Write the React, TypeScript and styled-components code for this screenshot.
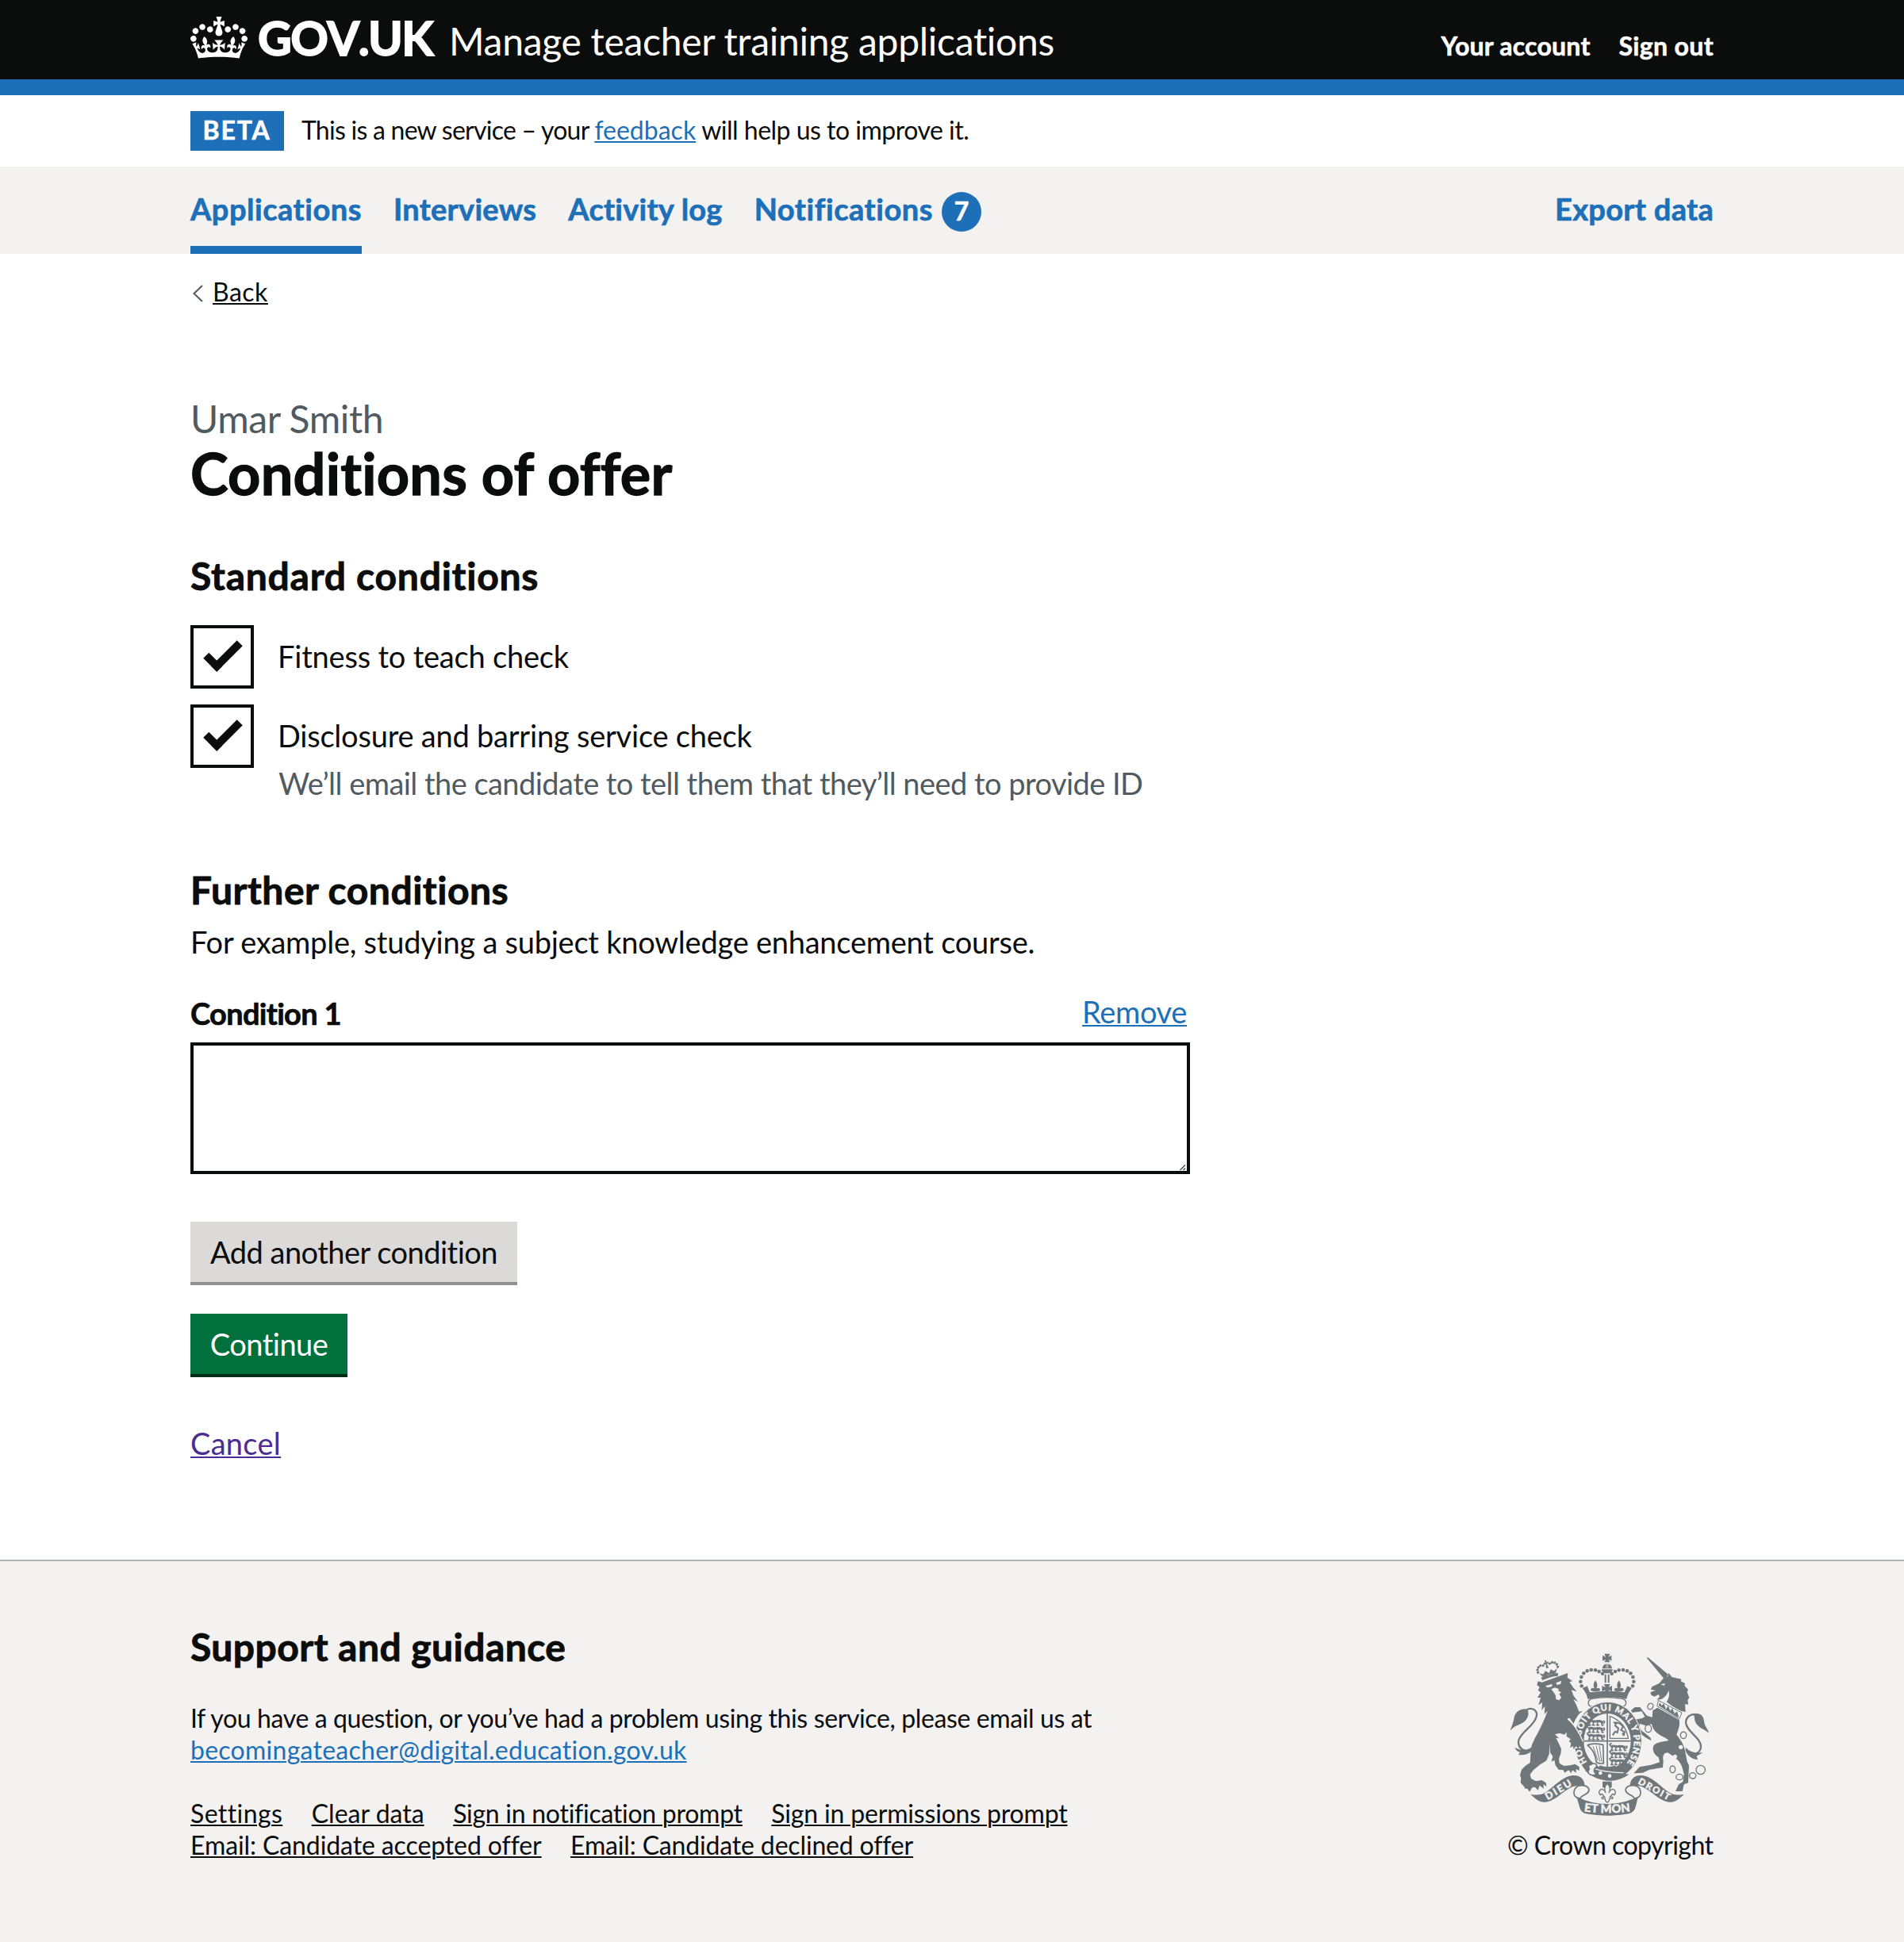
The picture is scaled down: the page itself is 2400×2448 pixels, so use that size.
import React from 'react';
import styled, { createGlobalStyle, css } from 'styled-components';

const ink = '#0b0c0c';
const blue = '#1d70b8';
const grey = '#505a5f';
const paper = '#f3f2f1';
const crest = '#6f777b';

const Global = createGlobalStyle`
  *, *::before, *::after { box-sizing: border-box; }
  body {
    margin: 0;
    background: #fff;
    color: ${ink};
    font-family: Lato, "Liberation Sans", sans-serif;
    font-variant-ligatures: none;
    -webkit-font-smoothing: antialiased;
  }
`;

const strong = css`
  font-weight: 700;
  -webkit-text-stroke: 0.018em currentColor;
`;

/* Tracked text: $t is the letter spacing in pixels */
const T = styled.span<{ $t?: number }>`
  letter-spacing: ${p => p.$t ?? 0}px;
  white-space: nowrap;
`;

const Container = styled.div`
  width: 1920px;
  margin: 0 auto;
`;

const Link = styled.a<{ $c?: string; $t?: number }>`
  color: ${p => p.$c ?? blue};
  letter-spacing: ${p => p.$t ?? 0}px;
  white-space: nowrap;
  text-decoration: underline;
  text-decoration-thickness: 2px;
  text-underline-offset: 2px;
`;

/* Header */
const Header = styled.header`
  height: 120px;
  background: ${ink};
  border-bottom: 20px solid ${blue};
  color: #fff;
`;
const HeaderRow = styled(Container)`
  display: flex;
  align-items: baseline;
  padding-top: 18px;
`;
const CrownIcon = styled.svg`
  align-self: flex-start;
  width: 72px;
  height: 53px;
  margin-top: 3px;
  flex: none;
`;
const LogoText = styled.span`
  ${strong}
  -webkit-text-stroke: 0.03em currentColor;
  flex: none;
  width: 219px;
  font-size: 59px;
  line-height: 60px;
  font-kerning: none;
  letter-spacing: -1.6px;
  margin-left: 13px;
`;
const ServiceName = styled.span`
  font-size: 48px;
  line-height: 60px;
  letter-spacing: -0.28px;
  margin-left: 22px;
  white-space: nowrap;
`;
const AccountNav = styled.nav`
  display: flex;
  gap: 36px;
  margin-left: auto;
  font-size: 32px;
  ${strong}
`;

/* Phase banner */
const Phase = styled(Container)`
  display: flex;
  align-items: center;
  height: 90px;
  font-size: 32px;
`;
const Tag = styled.strong`
  ${strong}
  width: 118px;
  height: 50px;
  line-height: 47px;
  padding-left: 15.5px;
  background: ${blue};
  color: #fff;
  letter-spacing: 1.9px;
`;
const PhaseText = styled.p`
  margin: 0 0 0 22px;
  line-height: 40px;
  padding-bottom: 3px;
  display: flex;
`;

/* Primary navigation */
const NavBar = styled.nav`
  background: ${paper};
`;
const NavRow = styled(Container)`
  display: flex;
  gap: 40px;
`;
const NavItem = styled.a<{ $current?: boolean; $end?: boolean; $t: number }>`
  display: flex;
  height: 110px;
  padding: 28px 0 22px;
  border-bottom: 10px solid ${p => (p.$current ? blue : 'transparent')};
  margin-left: ${p => (p.$end ? 'auto' : '0')};
  color: ${blue};
  font-size: 38px;
  line-height: 50px;
  letter-spacing: ${p => p.$t}px;
  white-space: nowrap;
  ${strong}
`;
const Badge = styled.span`
  width: 50px;
  height: 50px;
  margin: 4px 0 0 11px;
  border-radius: 50%;
  background: ${blue};
  color: #fff;
  font-size: 32px;
  line-height: 47px;
  letter-spacing: 0;
  text-align: center;
`;

/* Page body */
const Back = styled.div`
  display: flex;
  padding: 28px 0 0 2px;
  font-size: 32px;
  line-height: 40px;
`;
const Chevron = styled.svg`
  width: 14px;
  height: 24px;
  margin: 10px 12px 0 0;
`;
const Main = styled.main`
  padding-top: 110px;
  padding-bottom: 122px;
`;
const Caption = styled.span`
  display: block;
  color: ${grey};
  font-size: 48px;
  line-height: 60px;
  letter-spacing: -0.41px;
`;
const H1 = styled.h1`
  ${strong}
  margin: 0;
  font-size: 72px;
  line-height: 76px;
  letter-spacing: 0.24px;
`;
const H2 = styled.h2<{ $top: number; $t: number }>`
  ${strong}
  margin: ${p => p.$top}px 0 0;
  font-size: 48px;
  line-height: 60px;
  letter-spacing: ${p => p.$t}px;
`;
const Checks = styled.div`
  display: flex;
  flex-direction: column;
  gap: 20px;
  margin-top: 32px;
  font-size: 38px;
`;
const CheckRow = styled.label`
  display: flex;
  gap: 30px;
`;
const Box = styled.span`
  flex: none;
  width: 80px;
  height: 80px;
  border: 4px solid ${ink};
  background: #fff;
`;
const Tick = styled.span`
  display: block;
  width: 46px;
  height: 24px;
  margin: 18px 0 0 14px;
  border: solid ${ink};
  border-width: 0 0 10px 10px;
  transform: rotate(-45deg);
`;
const CheckText = styled.span`
  display: flex;
  flex-direction: column;
  line-height: 79px;
`;
const Hint = styled.span`
  margin-top: -5px;
  margin-left: 1px;
  color: ${grey};
  line-height: 50px;
  letter-spacing: -0.54px;
`;
const Body = styled.p`
  margin: 10px 0 0;
  font-size: 38px;
  line-height: 50px;
  letter-spacing: -0.24px;
`;
const Field = styled.div`
  width: 1260px;
  margin-top: 40px;
  font-size: 38px;
  line-height: 50px;
`;
const FieldHead = styled.div`
  display: flex;
  justify-content: space-between;
  padding-right: 4px;
  height: 62px;
`;
const Label = styled.label`
  ${strong}
  letter-spacing: -0.7px;
`;
const RemoveWrap = styled.span`
  margin-top: -2px;
`;
const AreaWrap = styled.div`
  display: grid;
`;
const Area = styled.textarea`
  grid-area: 1 / 1;
  width: 100%;
  height: 166px;
  margin: 0;
  border: 4px solid ${ink};
  border-radius: 0;
  background: #fff;
  resize: none;
`;
const Grip = styled.svg`
  grid-area: 1 / 1;
  align-self: end;
  justify-self: end;
  width: 8px;
  height: 8px;
  margin: 0 5px 4px 0;
`;
const Button = styled.button<{ $bg: string; $fg: string; $shadow: string; $w: number; $top: number; $t: number }>`
  display: block;
  width: ${p => p.$w}px;
  height: 76px;
  margin: ${p => p.$top}px 0 0;
  padding: 0;
  border: 0;
  background: ${p => p.$bg};
  box-shadow: 0 4px 0 ${p => p.$shadow};
  color: ${p => p.$fg};
  font-family: inherit;
  font-size: 38px;
  line-height: 75px;
  letter-spacing: ${p => p.$t}px;
`;
const CancelRow = styled.p`
  margin: 62px 0 0;
  font-size: 38px;
  line-height: 50px;
`;

/* Footer */
const Footer = styled.footer`
  height: 482px;
  border-top: 2px solid #b1b4b6;
  background: ${paper};
  font-size: 32px;
  line-height: 40px;
`;
const FooterRow = styled(Container)`
  display: flex;
  justify-content: space-between;
  align-items: flex-end;
`;
const Para = styled.p`
  margin: 40px 0 0;
`;
const Line = styled.div`
  display: flex;
  gap: 36.5px;
`;
const Meta = styled.div`
  margin-top: 40px;
`;
const Copyright = styled.div`
  display: flex;
  flex-direction: column;
  width: 260px;
`;
const Arms = styled.svg`
  width: 260px;
  height: 206.67px;
  margin-bottom: 15.6px;
`;

const Crown = () => (
  <CrownIcon viewBox="0 0 132 97" preserveAspectRatio="none" aria-hidden="true">
    <path
      fill="currentColor"
      fillRule="evenodd"
      d="M25 30.2c3.5 1.5 7.7-.2 9.1-3.7 1.5-3.6-.2-7.8-3.9-9.2-3.6-1.4-7.6.3-9.1 3.9-1.4 3.5.3 7.5 3.9 9zM9 39.5c3.6 1.5 7.8-.2 9.2-3.7 1.5-3.6-.2-7.8-3.9-9.1-3.6-1.5-7.6.2-9.1 3.8-1.4 3.5.3 7.5 3.8 9zM4.4 57.2c3.5 1.5 7.7-.2 9.1-3.8 1.5-3.6-.2-7.7-3.9-9.1-3.5-1.5-7.6.3-9.1 3.8-1.4 3.5.3 7.6 3.9 9.1zm38.3-21.4c3.5 1.5 7.7-.2 9.1-3.8 1.5-3.6-.2-7.7-3.9-9.1-3.6-1.5-7.6.3-9.1 3.8-1.3 3.6.4 7.7 3.9 9.1zm64.4-5.6c-3.6 1.5-7.8-.2-9.1-3.7-1.5-3.6.2-7.8 3.8-9.2 3.6-1.4 7.7.3 9.2 3.9 1.3 3.5-.4 7.5-3.9 9zm15.9 9.3c-3.6 1.5-7.7-.2-9.1-3.7-1.5-3.6.2-7.8 3.7-9.1 3.6-1.5 7.7.2 9.2 3.8 1.5 3.5-.3 7.5-3.8 9zm4.7 17.7c-3.6 1.5-7.8-.2-9.2-3.8-1.5-3.6.2-7.7 3.9-9.1 3.6-1.5 7.7.3 9.2 3.8 1.3 3.5-.4 7.6-3.9 9.1zM89.3 35.8c-3.6 1.5-7.8-.2-9.2-3.8-1.4-3.6.2-7.7 3.9-9.1 3.6-1.5 7.7.3 9.2 3.8 1.4 3.6-.3 7.7-3.9 9.1zM69.7 17.7l8.9 4.7V9.3l-8.9 2.8c-.2-.3-.5-.6-.9-.9L72.4 0H59.6l3.5 11.2c-.3.3-.6.5-.9.9l-8.8-2.8v13.1l8.8-4.7c.3.3.6.7.9.9l-5 15.4v.1c-.2.8-.4 1.6-.4 2.4 0 4.1 3.1 7.5 7 8.1h.2c.3 0 .7.1 1 .1.4 0 .7 0 1-.1h.2c4-.6 7.1-4.1 7.1-8.1 0-.8-.1-1.7-.4-2.4V34l-5.1-15.4c.4-.2.7-.6 1-.9zM66 92.8c16.9 0 32.8 1.1 47.1 3.2 4-16.9 8.9-26.7 14-33.5l-9.6-3.4c1 4.9 1.1 7.2 0 10.2-1.5-1.4-3-4.3-4.2-8.7L108.6 76c2.8-2 5-3.2 7.5-3.3-4.4 9.4-10 11.9-13.6 11.2-4.3-.8-6.3-4.6-5.6-7.9 1-4.7 5.7-5.9 8-.5 4.3-8.7-3-11.4-7.6-8.8 7.1-7.2 7.9-13.5 2.1-21.1-8 6.1-8.1 12.3-4.5 20.8-4.7-5.4-12.1-2.5-9.5 6.2 3.4-5.2 7.9-2 7.2 3.1-.6 4.3-6.4 7.8-13.5 7.2-10.3-.9-10.9-8-11.2-13.8 2.5-.5 7.1 1.8 11 7.3L80.2 60c-4.1 4.4-8 5.3-12.3 5.4 1.4-4.4 8-11.6 8-11.6H55.5s6.4 7.2 7.9 11.6c-4.2-.1-8-1-12.3-5.4l1.4 16.4c3.9-5.5 8.5-7.7 10.9-7.3-.3 5.8-.9 12.8-11.1 13.8-7.2.6-12.9-2.9-13.5-7.2-.7-5 3.8-8.3 7.1-3.1 2.7-8.7-4.6-11.6-9.4-6.2 3.7-8.5 3.6-14.7-4.6-20.8-5.8 7.6-5 13.9 2.2 21.1-4.7-2.6-11.9.1-7.7 8.8 2.3-5.5 7.1-4.2 8.1.5.7 3.3-1.3 7.1-5.7 7.9-3.5.7-9-1.8-13.5-11.2 2.5.1 4.7 1.3 7.5 3.3l-4.7-15.4c-1.2 4.4-2.7 7.2-4.3 8.7-1.1-3-.9-5.3 0-10.2l-9.5 3.4c5 6.9 9.9 16.7 14 33.5 14.8-2.1 30.8-3.2 47.7-3.2z"
    />
  </CrownIcon>
);

const archBeads: [number, number][] = [
  [341, 194], [337, 177], [340, 160], [349, 146], [362, 137], [377, 133], [393, 134], [407, 139], [420, 147],
];

/* Three small walking lions stacked in one quarter of the shield */
const Lions = ({ x, y }: { x: number; y: number }) => (
  <g transform={`translate(${x} ${y})`} fill="none" stroke={crest} strokeWidth="5" strokeLinecap="round">
    {[0, 27, 54].map(dy => (
      <g key={dy} transform={`translate(0 ${dy})`}>
        <path d="M6 4c8-6 14 2 22 0s14-4 26 2" strokeWidth="9" />
        <path d="M8 8l-4 10h7M22 8l-3 10h7M38 8l-3 10h7M52 8l2 10h5M60 2c6 0 4 10-2 8M2 2l-4-6 6-4" strokeWidth="5" />
      </g>
    ))}
  </g>
);

const HalfScroll = () => (
  <>
    <path
      fill={crest}
      d="M148 603c24 5 42 3 58-8 26-18 50-45 80-58 22-9 46-6 56 6 8 9 12 22 9 34-6-4-12-6-18-6-26-2-46 14-68 30-20 16-42 32-66 32-18 0-36-14-51-30z"
    />
    <path
      fill={paper}
      stroke={crest}
      strokeWidth="5"
      d="M324 574c16-8 38-4 44 8 5 14-12 22-24 28-6 4-10 8-10 12-14-6-24-14-22-26 1-10 6-18 12-22z"
    />
  </>
);

const RoyalArms = () => (
  <Arms viewBox="60 70 780 620" aria-hidden="true">
    <defs>
      <path id="garter" d="M361 482A101 118 0 1 1 494 503" />
      <path id="motto-mid" d="M340 666Q438 682 540 666" />
    </defs>

    {/* Lion */}
    <g transform="translate(48 48)" fill={crest}>
      <path d="M143 132L234 99L241 97L239 114L258 127L247 131L260 150L274 167L254 161L262 182L279 206L262 196L274 220L283 243L297 240L282 253L270 272L262 288L248 268L238 268L262 294L282 326L296 346L300 366L291 380L285 372L280 384L272 374L262 384L262 372L250 378L254 362L246 356L252 346L236 336L240 316L228 330L210 324L192 329L208 344L196 342L206 362L216 384L214 402L207 420L209 438L226 448L250 446L268 441L284 452L284 466L272 460L272 474L258 464L254 476L244 464L228 474L224 464L206 462L194 446L190 426L178 432L184 412L174 398L172 362L170 404L160 428L134 444L112 462L98 480L102 496L120 506L142 502L158 512L160 526L148 518L150 534L134 522L128 540L116 528L106 530L96 546L88 534L80 534L72 522L62 512L64 496L60 482L66 462L80 448L98 436L100 400L104 370L116 344L130 318L144 290L156 262L164 240L152 252L154 222L142 238L144 208L130 218L138 190L126 190L138 170L128 162L134 150L124 142L128 128Z" />
      <path d="M88 234C66 228 46 240 39 260C36 280 30 296 22 316C40 292 60 294 74 282C90 270 96 250 88 234Z" />
      <path d="M84 236C108 224 128 240 122 262C112 300 62 318 54 354C52 374 60 384 78 390" fill="none" stroke={crest} strokeWidth="7" />
      <path d="M104 376C90 390 66 392 40 378C46 392 54 394 60 396L54 406C74 408 90 406 104 392Z" />
      <path d="M156 146L182 138L180 148L164 152ZM196 134L216 126L214 138L200 142ZM178 158L192 152L208 158L204 164L216 170L208 176L216 190L208 200L196 196L194 180L186 168Z" fill={paper} />
      <g transform="rotate(-16 166 90)">
        <path d="M134 106Q166 100 200 106L198 117Q166 112 136 117ZM132 88L140 104H192L202 88L188 96L178 86L168 98L156 86L146 96Z" />
        {[[128, 84], [129, 74], [135, 66], [144, 62], [154, 64], [180, 64], [190, 62], [199, 66], [205, 74], [206, 84]].map(([x, y]) => (
          <circle key={`${x}-${y}`} cx={x} cy={y} r="4.8" />
        ))}
        <path d="M163 48H171L169 55H176V62H169L172 78H162L165 62H158V55H165Z" />
      </g>
    </g>

    {/* Unicorn */}
    <g transform="translate(420 48)" fill={crest}>
      <path d="M167 39L172 38L249 103L234 120Z" />
      <path d="M234 112L247 110L250 96L262 112L298 120L296 128L312 136L310 144L324 160L320 168L328 190L322 198L324 216L312 214L314 244L296 240L264 222L242 206C252 192 254 178 250 162C244 182 232 190 222 196L205 198L216 186L212 178L196 186L184 180L181 170L200 162L182 159L188 148L214 136Z" />
      <path d="M219 140L236 136L234 144Z" fill={paper} />
      <path d="M211 200L300 247L290 270L206 222Z" fill={paper} stroke={crest} strokeWidth="3" />
      <path d="M212 220L216 208L224 220L232 212L240 234L248 220L256 240L264 230L272 250L282 242L288 262L284 264Z" />
      <path d="M190 238L208 228L290 274C294 296 286 312 280 330C292 346 306 362 312 390L320 432L327 446L324 512L308 518L302 544L276 544L288 518L304 508L308 478L300 450C292 428 270 412 246 398C232 398 226 410 230 430L228 454L178 462L152 474L118 476L140 452L184 444L216 434L212 416C194 404 188 390 192 374C200 358 222 358 250 352C240 340 220 336 204 322C194 312 188 302 186 290L164 296L140 288C140 306 146 316 158 322L182 342L184 352L172 346L162 340L146 328L134 318C128 304 122 286 118 274L150 268L160 262L148 242L112 246L108 238L122 226L142 226L156 244L168 258L188 264Z" />
      <path d="M344 254C362 244 382 254 384 280C386 300 400 308 402 324C392 312 366 306 354 288C346 276 350 264 344 254Z" />
      <path d="M360 254C336 248 316 262 315 284C318 320 372 340 372 376C370 400 350 406 328 400" fill="none" stroke={crest} strokeWidth="7" />
      <path d="M314 378C332 396 350 400 378 398C368 406 360 408 356 412L360 424C336 424 322 408 314 392Z" />
      <circle cx="296" cy="377" r="8" fill={paper} />
      <circle cx="274" cy="413" r="8" fill={paper} />
      <g fill={paper} stroke={crest} strokeWidth="4">
        <ellipse cx="181" cy="223" rx="10" ry="12" transform="rotate(30 181 223)" />
        <ellipse cx="173" cy="307" rx="12" ry="14" />
        <ellipse cx="306" cy="332" rx="11" ry="13" />
        <ellipse cx="265" cy="461" rx="10" ry="13" />
        <ellipse cx="291" cy="490" rx="13" ry="11" />
        <ellipse cx="341" cy="485" rx="12" ry="11" />
        <circle cx="371" cy="463" r="17" />
      </g>
    </g>

    {/* Crown */}
    <g fill={crest}>
      <path d="M427 72H448L443 84L454 78V99L443 93L448 104H427L432 93L420 99V78L432 84Z" />
      <path d="M419 128A18 18 0 0 1 456 128Z" />
      <path d="M416 131H459Q456 145 443 146H432Q419 145 416 131Z" />
      <path d="M435 106V126M440 106V126" stroke={paper} strokeWidth="2" />
      {archBeads.map(([x, y]) => (
        <React.Fragment key={`${x}-${y}`}>
          <circle cx={x} cy={y} r="6.8" />
          <circle cx={875 - x} cy={y} r="6.8" />
        </React.Fragment>
      ))}
      <path d="M428 150H434V182H428ZM440 150H446V182H440Z" />
      <path d="M425 187H449L443 199L456 193V215L443 209L447 220H427L431 209L418 215V193L431 199Z" />
      <path d="M393 173Q405 189 397 203Q410 197 411 211L402 214H384L375 211Q376 197 389 203Q381 189 393 173Z" />
      <path d="M482 173Q494 189 486 203Q499 197 500 211L491 214H473L464 211Q465 197 478 203Q470 189 482 173Z" />
      <path d="M344 202L362 194L372 218Q437 208 503 218L514 194L531 202Q515 222 511 243Q437 228 364 243Q360 222 344 202Z" />
    </g>
    <path d="M376 243Q437 231 498 243Q512 250 508 262Q504 272 492 272Q437 250 383 272Q370 272 367 262Q364 250 376 243Z" fill={paper} stroke={crest} strokeWidth="4" />

    {/* Garter and shield */}
    <ellipse cx="440" cy="402" rx="128" ry="148" fill={crest} stroke={paper} strokeWidth="3" />
    <ellipse cx="438" cy="402" rx="89" ry="104" fill={paper} />
    <path d="M438 298V506M349 402H527" stroke={crest} strokeWidth="5" />
    <Lions x={364} y={324} />
    <Lions x={449} y={419} />
    <path d="M448 308V392H517Q508 330 448 308Z" fill="none" stroke={crest} strokeWidth="4" />
    <path d="M458 380l10-14 8 4 4-16-12-10 4-12 14 4 12 12-8 12 14 8-6 14M462 330l10 8M494 372l10 8" fill="none" stroke={crest} strokeWidth="6" />
    <path d="M364 418Q380 408 422 416L424 486Q404 490 396 480Q392 440 364 418Z" fill="none" stroke={crest} strokeWidth="5" />
    <path d="M384 422L402 476M396 420L410 480M408 420L417 480" stroke={crest} strokeWidth="3" />
    <path d="M410 494Q438 506 468 494L472 510H404Z" fill={crest} />
    <text fill={paper} stroke={paper} strokeWidth="1.2" fontFamily="Lato, sans-serif" fontWeight="900" fontSize="33">
      <textPath href="#garter" textLength="512" lengthAdjust="spacing">HONI SOIT QUI MAL Y PENSE</textPath>
    </text>
    <path d="M352 500Q400 530 486 524L520 528Q480 556 436 552Q390 546 356 516Z" fill={crest} />
    <path d="M368 494Q398 520 500 522" fill="none" stroke={paper} strokeWidth="4" />
    <path d="M378 490Q362 494 370 508Q360 520 372 528Q388 536 396 526Q384 518 390 506Q402 498 396 490Q386 484 378 490Z" fill={paper} stroke={crest} strokeWidth="5" />
    <circle cx="412" cy="523" r="7" fill={paper} />
    <circle cx="447" cy="534" r="7" fill={paper} />

    {/* Lion's forepaw over the garter */}
    <path
      transform="translate(48 48)"
      d="M238 268L262 294L282 326L300 350L300 366L291 380L285 372L280 384L272 374L262 384L262 372L250 378L254 362L246 356L252 346L236 336Z"
      fill={crest}
    />
    <path d="M288 318Q322 344 346 404" fill="none" stroke={paper} strokeWidth="4" />

    {/* Scrolls */}
    <HalfScroll />
    <g transform="translate(876 0) scale(-1 1)">
      <HalfScroll />
    </g>
    <path d="M322 612Q378 640 438 640T554 612Q550 634 544 654Q540 670 522 676Q438 692 354 676Q338 670 334 654Q328 634 322 612Z" fill={crest} />
    <g fill={paper} stroke={paper} strokeWidth="1.2" fontFamily="Lato, sans-serif" fontWeight="900">
      <text transform="translate(212 626) rotate(-31)" fontSize="38" textLength="110">DIEU</text>
      <text transform="translate(552 562) rotate(29)" fontSize="35" textLength="132">DROIT</text>
      <text fontSize="44">
        <textPath href="#motto-mid" startOffset="10" textLength="176">ET MON</textPath>
      </text>
    </g>
    <path d="M420 555H455V578H420Z" fill={crest} />
    <path
      d="M438 562Q454 578 444 598Q452 580 464 586Q474 596 464 606Q460 600 456 604L448 614H458V620H446Q446 632 438 634Q430 632 430 620H418V614H428L420 604Q416 600 412 606Q402 596 412 586Q424 580 432 598Q422 578 438 562Z"
      fill={paper}
      stroke={crest}
      strokeWidth="4"
    />
  </Arms>
);

export default function App() {
  return (
    <>
      <Global />
      <Header>
        <HeaderRow>
          <Crown />
          <LogoText>GOV.UK</LogoText>
          <ServiceName>Manage teacher training applications</ServiceName>
          <AccountNav>
            <T $t={0.22}>Your account</T>
            <T $t={0.35}>Sign out</T>
          </AccountNav>
        </HeaderRow>
      </Header>

      <Phase>
        <Tag>BETA</Tag>
        <PhaseText>
          <T $t={-0.75}>This is a new service – your&nbsp;</T>
          <Link>feedback</Link>
          <T $t={-0.5}>&nbsp;will help us to improve it.</T>
        </PhaseText>
      </Phase>

      <NavBar>
        <NavRow>
          <NavItem $current $t={0.52}>Applications</NavItem>
          <NavItem $t={0.3}>Interviews</NavItem>
          <NavItem $t={0.25}>Activity log</NavItem>
          <NavItem $t={0.55}>
            Notifications
            <Badge>7</Badge>
          </NavItem>
          <NavItem $end $t={0.3}>Export data</NavItem>
        </NavRow>
      </NavBar>

      <Container>
        <Back>
          <Chevron viewBox="0 0 14 24" aria-hidden="true">
            <path d="M13 2L2.5 12L13 22" fill="none" stroke={grey} strokeWidth="2" />
          </Chevron>
          <Link $c={ink} $t={0.5}>Back</Link>
        </Back>

        <Main>
          <Caption>Umar Smith</Caption>
          <H1>Conditions of offer</H1>

          <H2 $top={62} $t={0.75}>Standard conditions</H2>
          <Checks>
            <CheckRow>
              <Box><Tick /></Box>
              <CheckText><T $t={-0.2}>Fitness to teach check</T></CheckText>
            </CheckRow>
            <CheckRow>
              <Box><Tick /></Box>
              <CheckText>
                <T $t={-0.22}>Disclosure and barring service check</T>
                <Hint>We’ll email the candidate to tell them that they’ll need to provide ID</Hint>
              </CheckText>
            </CheckRow>
          </Checks>

          <H2 $top={80} $t={0.5}>Further conditions</H2>
          <Body>For example, studying a subject knowledge enhancement course.</Body>

          <Field>
            <FieldHead>
              <Label>Condition 1</Label>
              <RemoveWrap><Link $t={-0.35}>Remove</Link></RemoveWrap>
            </FieldHead>
            <AreaWrap>
              <Area aria-label="Condition 1" />
              <Grip viewBox="0 0 8 8" aria-hidden="true">
                <path d="M0.5 7L7 0.5M4.5 7L7 4.5" stroke="#4a4a4a" strokeWidth="1.4" />
              </Grip>
            </AreaWrap>
          </Field>

          <Button $bg="#dbdad9" $fg={ink} $shadow="#929191" $w={412} $top={60} $t={-0.53}>Add another condition</Button>
          <Button $bg="#00703c" $fg="#fff" $shadow="#002d18" $w={198} $top={40} $t={-0.5}>Continue</Button>

          <CancelRow><Link $c="#4c2c92" $t={0.3}>Cancel</Link></CancelRow>
        </Main>
      </Container>

      <Footer>
        <FooterRow>
          <div>
            <H2 $top={78} $t={0.45}>Support and guidance</H2>
            <Para>
              <T $t={-0.38}>If you have a question, or you’ve had a problem using this service, please email us at</T>
              <br />
              <Link $t={0.265}>becomingateacher@digital.education.gov.uk</Link>
            </Para>
            <Meta>
              <Line>
                <Link $c={ink} $t={0.4}>Settings</Link>
                <Link $c={ink}>Clear data</Link>
                <Link $c={ink} $t={-0.27}>Sign in notification prompt</Link>
                <Link $c={ink} $t={-0.18}>Sign in permissions prompt</Link>
              </Line>
              <Line>
                <Link $c={ink} $t={-0.1}>Email: Candidate accepted offer</Link>
                <Link $c={ink} $t={-0.16}>Email: Candidate declined offer</Link>
              </Line>
            </Meta>
          </div>
          <Copyright>
            <RoyalArms />
            <T $t={-0.52}>© Crown copyright</T>
          </Copyright>
        </FooterRow>
      </Footer>
    </>
  );
}
